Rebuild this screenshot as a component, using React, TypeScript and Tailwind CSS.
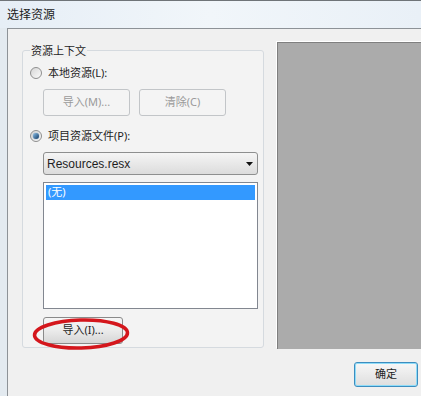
import React from "react";

const FONT = "font-['Noto_Sans','Noto_Sans_CJK_SC',sans-serif]";

function Radio({ checked, label }: { checked?: boolean; label: string }) {
  return (
    <div className="flex h-[15px] items-center pl-[3px]">
      <span className="flex h-[12px] w-[12px] items-center justify-center rounded-full border border-[#8f8f8f] bg-gradient-to-br from-[#d6d6d6] to-[#fbfbfb]">
        {checked && (
          <span className="h-[6px] w-[6px] rounded-full bg-gradient-to-br from-[#8fc3ea] to-[#113b66] shadow-[0_0_1px_#1d4f80]" />
        )}
      </span>
      <span className="ml-[6px] text-[11px] leading-[15px] text-[#1e1e1e]">{label}</span>
    </div>
  );
}

function Btn({
  children,
  disabled,
  className = "",
}: {
  children: React.ReactNode;
  disabled?: boolean;
  className?: string;
}) {
  return (
    <div
      className={
        "flex h-[27px] items-center justify-center rounded-[3px] border text-[11px] " +
        (disabled
          ? "border-[#c2c5c8] bg-[#f4f4f4] text-[#9a9a9a] "
          : "border-[#8a8a8a] bg-gradient-to-b from-[#f6f6f6] via-[#ebebeb] to-[#d6d6d6] text-[#1e1e1e] ") +
        className
      }
    >
      {children}
    </div>
  );
}

export default function App() {
  return (
    <div
      className={`${FONT} flex h-[396px] w-[421px] flex-col overflow-hidden border-t border-[#6f7478] bg-[#e3eaf0]`}
    >
      <div className="flex h-[27px] shrink-0 items-center bg-gradient-to-r from-[#e6eef6] via-[#f1f6fa] to-[#e9f0f7] pl-[7px] text-[12px] text-[#1b1b1b]">
        选择资源
      </div>

      <div className="ml-[7px] flex-1 border-l border-t border-[#8d9297] bg-[#f0f0f0] pl-[14px] pt-[13px]">
        <div className="flex items-start gap-[13px]">
          <div className="relative mt-[8px] h-[298px] w-[242px] shrink-0 rounded-[3px] border border-[#d5dadf] bg-[#f3f3f3]">
            <span className="absolute -top-[7px] left-[7px] bg-[#f0f0f0] px-[1px] text-[11px] leading-[14px] text-[#1e1e1e]">
              资源上下文
            </span>

            <div className="flex flex-col pl-[4px]">
              <div className="mt-[14px]">
                <Radio label="本地资源(L):" />
              </div>
              <div className="ml-[16px] mt-[9px] flex gap-[9px]">
                <Btn disabled className="w-[87px]">
                  导入(M)...
                </Btn>
                <Btn disabled className="w-[87px]">
                  清除(C)
                </Btn>
              </div>
              <div className="mt-[12px]">
                <Radio checked label="项目资源文件(P):" />
              </div>
              <div className="ml-[16px] mt-[9px] flex h-[23px] w-[215px] items-center justify-between rounded-[3px] border border-[#8e8f8f] bg-gradient-to-b from-[#f5f5f5] to-[#dcdcdc] pl-[3px] pr-[4px] text-[12px] text-[#1e1e1e]">
                <span className="font-['Liberation_Sans',sans-serif]">Resources.resx</span>
                <svg width="7" height="4" viewBox="0 0 7 4">
                  <path d="M0 0H7L3.5 4Z" fill="#111" />
                </svg>
              </div>
              <div className="ml-[16px] mt-[7px] h-[127px] w-[215px] border border-[#828790] bg-white p-[2px]">
                <div className="flex h-[15px] items-center bg-[#3399ff] pl-[2px] text-[11px] text-white">
                  (无)
                </div>
              </div>
              <Btn className="ml-[16px] mt-[8px] w-[80px]">导入(I)...</Btn>
            </div>

            <svg
              className="absolute left-[8px] top-[266px]"
              width="100"
              height="34"
              viewBox="0 0 100 34"
            >
              <ellipse
                cx="50"
                cy="17"
                rx="46.5"
                ry="14"
                fill="none"
                stroke="#d4161c"
                strokeWidth="3.5"
                transform="rotate(-1.5 50 17)"
              />
            </svg>
          </div>

          <div className="h-[307px] w-[170px] shrink-0 border-l border-t border-[#7f7f7f] bg-[#ababab] shadow-[-1px_-1px_0_#ffffff]" />
        </div>

        <div className="ml-[332px] mt-[13px] flex gap-[3px]">
          <div className="flex h-[25px] w-[64px] shrink-0 items-center justify-center rounded-[3px] border border-[#3c8dbf] bg-gradient-to-b from-[#f7f7f7] to-[#dedede] text-[11px] text-[#1e1e1e] shadow-[inset_0_0_0_1px_#8fdcf8]">
            确定
          </div>
          <div className="h-[25px] w-[75px] shrink-0 rounded-[3px] border border-[#8a8a8a] bg-gradient-to-b from-[#f6f6f6] to-[#dcdcdc]" />
        </div>
      </div>
    </div>
  );
}
